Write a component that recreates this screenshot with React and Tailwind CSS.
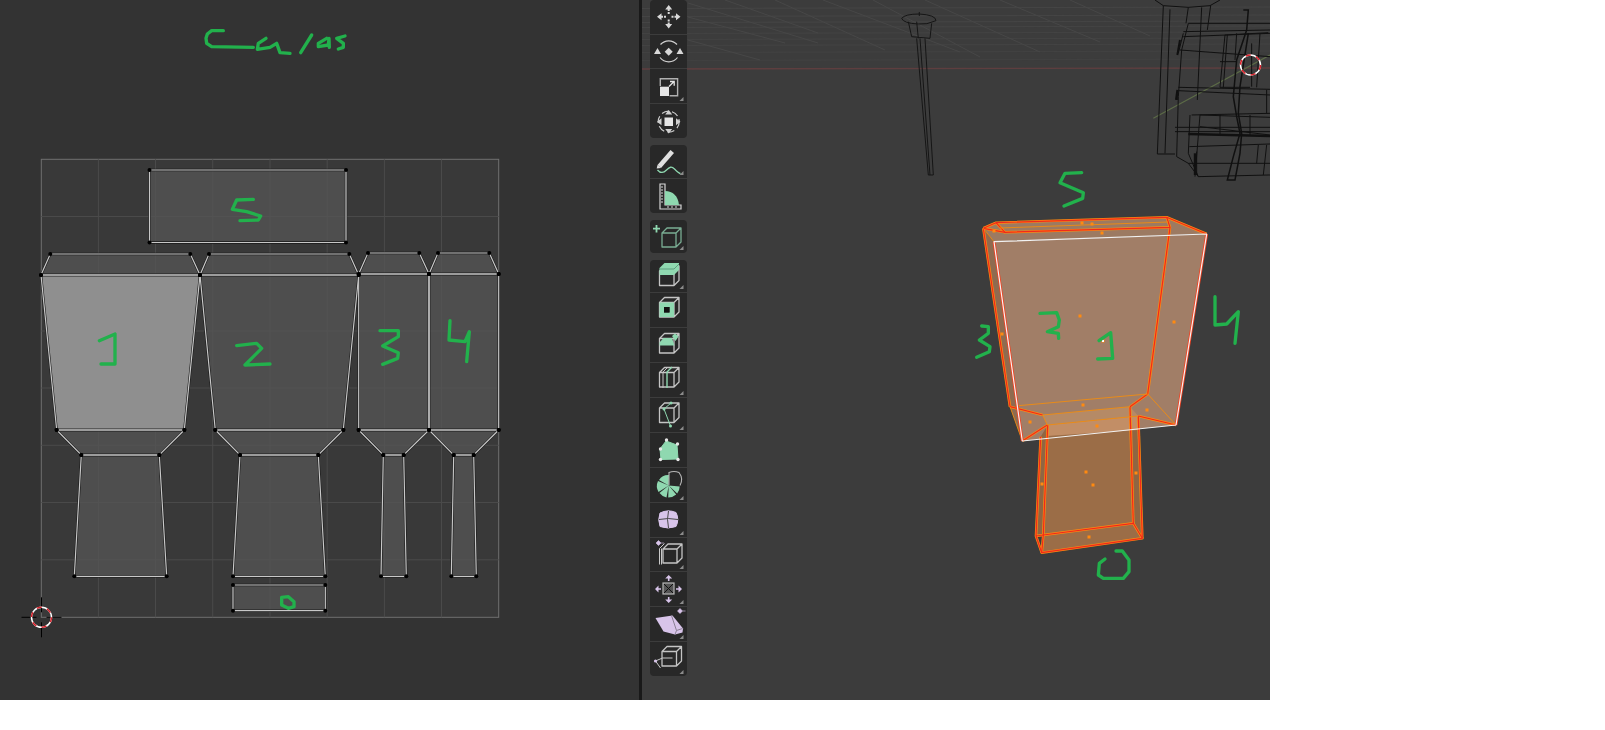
import React from "react";

const GREEN = "#22b14c";
const G = "#8fd8b0"; // tool green
const P = "#d8c4ea"; // tool purple
const W = "#c4c4c4";

// UV islands, in page pixels
const uvFaces = [
  [[149.5, 170], [346, 170], [346, 242.5], [149.5, 242.5]],
  [[50.3, 254], [190.3, 254], [200, 275], [41, 275]],
  [[41, 275], [200, 275], [184.3, 430], [56.7, 430]],
  [[56.7, 430], [184.3, 430], [159.3, 455], [81.3, 455]],
  [[81.3, 455], [159.3, 455], [166.7, 576.3], [74.3, 576.3]],
  [[209, 254], [349.3, 254], [358.7, 275], [200, 275]],
  [[200, 275], [358.7, 275], [343.3, 430], [215.3, 430]],
  [[215.3, 430], [343.3, 430], [318.3, 455], [240, 455]],
  [[240, 455], [318.3, 455], [325.3, 576.3], [233, 576.3]],
  [[233, 585], [325.3, 585], [325.3, 610.7], [233, 610.7]],
  [[368, 253], [419.3, 253], [429, 274], [358.7, 274]],
  [[358.7, 274], [429, 274], [429, 430], [358.7, 430]],
  [[358.7, 430], [429, 430], [403.7, 455], [383.3, 455]],
  [[383.3, 455], [403.7, 455], [406.3, 576.3], [381, 576.3]],
  [[438, 253], [489.3, 253], [498.7, 274], [429, 274]],
  [[429, 274], [498.7, 274], [498.7, 430], [429, 430]],
  [[429, 430], [498.7, 430], [473.7, 455], [453.7, 455]],
  [[453.7, 455], [473.7, 455], [476.3, 576.3], [451.3, 576.3]],
];

const str = (p) => p.map((q) => q.join(",")).join(" ");

// hand-drawn marks, [offset x, offset y, points at 3x]
const uvMarks = [
  [180, 10, "130,62 95,62 82,72 78,85 80,100 95,110 220,112"],
  [180, 10, "258,85 235,100 232,118 270,112 290,100 300,128 330,130"],
  [180, 10, "395,75 362,128"],
  [180, 10, "440,85 415,100 415,110 445,105 447,85 448,112"],
  [180, 10, "495,78 470,85 490,100 490,112 475,117"],
  [0, 130, "760,208 710,210 697,238 740,245 782,258 775,270 720,272"],
  [0, 130, "298,632 345,612 345,702 303,702"],
  [0, 130, "710,647 770,640 785,655 735,705 810,702"],
  [0, 130, "1140,602 1195,602 1195,620 1148,648 1195,668 1193,685 1148,703"],
  [0, 130, "1350,572 1347,630 1395,635 1408,605 1400,695"],
  [0, 420, "845,532 865,530 882,545 882,560 865,565 845,555 845,532"],
];

const viewMarks = [
  [960, 170, "365,8 315,10 300,38 370,68 368,85 312,108"],
  [960, 170, "240,430 290,428 298,450 295,470 262,485 295,490 296,505"],
  [960, 170, "417,512 452,488 458,565 413,567"],
  [960, 170, "65,468 85,470 85,490 58,510 90,530 88,545 50,562"],
  [960, 170, "765,380 765,465 800,462 835,425 825,520"],
  [990, 380, "378,513 397,513 417,540 417,575 400,595 340,595 325,585 328,550 345,537"],
];

function Marks({ list, width }) {
  return list.map(([x, y, p], i) => (
    <polyline
      key={i}
      points={p}
      transform={`translate(${x} ${y}) scale(${1 / 3})`}
      fill="none"
      stroke={GREEN}
      strokeWidth={width}
      strokeLinecap="round"
      strokeLinejoin="round"
    />
  ));
}

function Cursor({ x, y, cross }) {
  return (
    <g fill="none">
      {cross && (
        <path
          d={`M${x - 20} ${y}H${x - 5}M${x + 5} ${y}H${x + 20}M${x} ${y - 20}V${y - 5}M${x} ${y + 5}V${y + 20}`}
          stroke="#000"
          strokeWidth="1"
        />
      )}
      <circle cx={x} cy={y} r="10" stroke="#fff" strokeWidth="1.5" />
      <circle cx={x} cy={y} r="10" stroke="#d8202a" strokeWidth="1.5" strokeDasharray="5 5.5" />
    </g>
  );
}

function UvCanvas() {
  const gridX = [98.4, 155.5, 212.7, 270, 327.2, 384.4, 441.5];
  const gridY = [216.5, 273.7, 331, 388, 445.3, 502.5, 559.8];
  const verts = uvFaces.flat();
  return (
    <svg viewBox="0 0 639 700" className="block w-full h-full">
      <rect x="41.3" y="159.3" width="457.4" height="458" fill="#393939" stroke="#707070" strokeWidth="1" />
      {gridX.map((x) => (
        <line key={x} x1={x} x2={x} y1="159.3" y2="617.3" stroke="#4a4a4a" />
      ))}
      {gridY.map((y) => (
        <line key={y} y1={y} y2={y} x1="41.3" x2="498.7" stroke="#4a4a4a" />
      ))}
      {uvFaces.map((f, i) => (
        <polygon key={i} points={str(f)} fill={i === 2 ? "#8f8f8f" : "#545454"} fillOpacity={i === 2 ? 1 : 0.78} />
      ))}
      {uvFaces.map((f, i) => (
        <polygon key={i} points={str(f)} fill="none" stroke="#1a1a1a" strokeWidth="2.4" />
      ))}
      {uvFaces.map((f, i) => (
        <polygon key={i} points={str(f)} fill="none" stroke="#c8c8c8" strokeWidth="1.2" />
      ))}
      {verts.map(([x, y], i) => (
        <circle key={i} cx={x} cy={y} r="2" fill="#000" />
      ))}
      <Marks list={uvMarks} width={10} />
      <Cursor x={41.5} y={617.3} cross />
    </svg>
  );
}

// mesh edges in the 3D view: orange with a red core
const meshEdges = [
  "983.3,228.3 996,222.7 1166.7,217.3 1206.7,234",
  "996,222.7 1005,232.3 1170,227.3 1166.7,217.3",
  "983.3,228.3 1005,232.3",
  "983.3,228.3 1010,406.7",
  "1170,227.3 1147.7,394",
  "1147.7,394 1130,406.7",
  "1138.3,416 1176,425",
  "1010,406.7 1042.7,415",
  "1047.3,425 1022.3,441",
  "1040.7,436.7 1036,536 1041.7,552.7 1142.3,538.3 1133.3,523.3 1043.3,535 1036,536",
  "1047.7,425 1043.3,535 1041.7,552.7",
  "1130,406.7 1133.3,523.3",
  "1138.3,416 1142.3,538.3",
];
const thinEdges = [
  "1018.3,405.7 1147.7,394",
  "1042.7,415 1130,406.7",
  "1047.3,425 1138.3,416",
  "1147.7,394 1176,425",
  "994,241.7 983.3,228.3",
  "1000,228 1168,222",
  "1010,406.7 1022.3,441",
  "1042.7,415 1047.3,425",
];
const meshDots = [
  [994, 231], [1082, 223], [1092, 224], [1102, 233], [1080, 316], [1103, 341], [1174, 322], [1002, 334],
  [1083, 405], [1030, 422], [1147, 410], [1097, 426], [1086, 472], [1093, 485], [1042, 484], [1136, 473], [1089, 537],
];

function Viewport() {
  const rows = [8, 16, 22, 27, 33, 39, 45, 52, 60];
  return (
    <svg viewBox="642 0 628 700" className="absolute inset-0 block w-full h-full">
      <g stroke="#464646" strokeWidth="1" fill="none">
        {rows.map((y, i) => (
          <line key={y} x1="642" x2="1270" y1={y + 0.5} y2={y - 1} strokeOpacity={0.95 - i * 0.05} />
        ))}
        <path d="M688 3L818 43M688 17L785 43M725 0L818 33M775 0L885 50M823 0L960 52M873 0L980 57M925 0L1040 52M1000 0L1100 42M1070 0L1150 36M688 40L760 60" stroke="#474747" />
      </g>
      <line x1="642" x2="1270" y1="69" y2="68" stroke="#5e3e3f" strokeWidth="1.4" />

      {/* lamp */}
      <g transform="translate(860 0) scale(0.3333)" fill="none" stroke="#151515" strokeWidth="3">
        <path d="M125 55Q135 42 178 42Q228 45 228 62Q200 75 175 72Q130 70 125 55ZM178 36V48M145 65L155 110L210 115L215 70M170 65L175 115M170 115L205 525H220L195 115M180 115L210 525" />
      </g>

      {/* chair wireframe */}
      <g transform="translate(1120 0) scale(0.3333)" fill="none" stroke="#101010" strokeWidth="3">
        <path d="M100 355L450 165" stroke="#5c6b47" strokeWidth="3.500" />
        <path d="M105 0L130 17L205 22L270 17L300 0M130 17L112 462H165M150 28L135 460M245 22L232 300M272 17L262 90M205 22L198 70" />
        <path d="M205 70L185 150L175 290L170 470L205 490L235 530M205 70H450M190 95L450 90M190 110L450 100M180 150L450 170M175 262L450 268M175 272L450 285M190 100L175 160" />
        <path d="M315 105L300 262L390 262M315 105L445 98M322 105L310 262M300 185H350M420 100L410 262M395 130V260M350 100L345 180" />
        <path d="M370 30H385L380 90L350 180L340 290L350 350L360 400L340 470L322 540H345L360 460L365 400L355 340L360 260L385 100" strokeWidth="4.500" />
        <path d="M215 345L450 340M210 345L205 460M240 345L225 530M165 382H450M165 395H450M240 380L450 405M205 460L235 530L450 525M205 490L450 490M415 435L410 490M230 455V525M172 280V300M208 440L450 432M240 345L450 352M300 345V405M390 345V405M440 270V340M440 435L430 525" />
        <path d="M205 402L450 408" strokeWidth="7" />
        <path d="M225 460V525" strokeWidth="7" />
        <path d="M180 120L172 165M172 270L168 300" strokeWidth="6" />
      </g>
      <Cursor x={1250.5} y={65} />

      {/* mesh */}
      <polygon points="983.3,228.3 996,222.7 1166.7,217.3 1206.7,234 994,241.7" fill="#9c7a62" />
      <polygon points="983.3,228.3 994,241.7 1022.3,441 1010,406.7" fill="#8f6b50" />
      <polygon points="994,241.7 1206.7,234 1176,425 1022.3,441" fill="#a17e67" />
      <polygon points="1047.3,425 1138.3,416 1133.3,523.3 1043.3,535" fill="#9b6d47" />
      <polygon points="1040.7,436.7 1047.7,425 1043.3,535 1036,536" fill="#8f6643" />
      <polygon points="1133,416 1138.3,416 1142.3,538.3 1133.3,523.3" fill="#8f6643" />
      <polygon points="1043.3,535 1133.3,523.3 1142.3,538.3 1041.7,552.7" fill="#9b6d47" />
      <polygon points="1042.7,415 1130,406.7 1138.3,416 1047.3,425" fill="#b58a66" />
      <polygon points="1047.3,425 1138.3,416 1138,430 1047,436" fill="#c28e66" />
      <g fill="none" strokeLinejoin="round">
        {meshEdges.map((p, i) => (
          <polyline key={i} points={p} stroke="#ff8a10" strokeWidth="2.6" />
        ))}
        {meshEdges.map((p, i) => (
          <polyline key={i} points={p} stroke="#f02a1c" strokeWidth="1.2" />
        ))}
        {thinEdges.map((p, i) => (
          <polyline key={i} points={p} stroke="#f08c10" strokeWidth="0.9" />
        ))}
        <polyline points="1022.3,441 994,241.7" stroke="#f5401f" strokeWidth="2.8" />
        <polyline points="1206.7,234 1176,425" stroke="#f5401f" strokeWidth="2.8" />
        <polygon points="994,241.7 1206.7,234 1176,425 1022.3,441" stroke="#f2f2f2" strokeWidth="1.2" />
      </g>
      {meshDots.map(([x, y], i) => (
        <rect key={i} x={x - 1.5} y={y - 1.5} width="3" height="3" fill="#ff8a10" />
      ))}
      <rect x="1102" y="340" width="2" height="2" fill="#fff" />
      <Marks list={viewMarks} width={10} />
    </svg>
  );
}

// small box used by most of the tool icons
function Cube({ x = 9.5, y = 11, s = 14.5, d = 5, c = W }) {
  return (
    <path
      d={`M${x} ${y}h${s}v${s}h${-s}zM${x} ${y}l${d} ${-d}h${s}v${s}l${-d} ${d}M${x + s} ${y}l${d} ${-d}`}
      fill="none"
      stroke={c}
      strokeWidth="1.3"
      strokeLinejoin="round"
    />
  );
}

const icons = {
  move: (
    <g fill="#d8d8d8" stroke="#d8d8d8">
      <path d="M18.7 5l3.500 4.500h-7zM18.7 28.5l3.500-4.500h-7zM7 16.7l4.500-3.500v7zM30.5 16.7l-4.500-3.500v7z" stroke="none" />
      <path d="M18.7 9v5M18.7 19.500v5M11 16.7h5M21.500 16.7h5" strokeWidth="2" fill="none" strokeDasharray="2 1" />
    </g>
  ),
  rotate: (
    <g stroke="#cfcfcf" fill="none" strokeWidth="1.2">
      <path d="M10.500 9.500A11 11 0 0 1 27 9.500M27.500 22.500A11 11 0 0 1 10 22.500" />
      <path d="M18.7 12.700l4 4-4 4-4-4z" fill="#d8d8d8" stroke="none" />
      <path d="M4 19h7l-3.500-6zM26.500 19h7l-3.500-6z" fill="#d8d8d8" stroke="none" />
    </g>
  ),
  scale: (
    <g>
      <path d="M10.300 17V9.700h17.300v17h-8" fill="none" stroke="#b0b0b0" strokeWidth="1.400" />
      <rect x="10" y="17.700" width="9" height="9.300" fill="#e6e6e6" />
      <path d="M19 17.500l5-5M20 12.500h4.200v4.200" fill="none" stroke="#e6e6e6" strokeWidth="1.300" />
    </g>
  ),
  transform: (
    <g>
      <circle cx="18.700" cy="17.700" r="10.500" fill="none" stroke="#cfcfcf" strokeWidth="1.200" strokeDasharray="7 3.500" />
      <rect x="14.500" y="13.500" width="8.500" height="8.500" fill="#e6e6e6" />
      <path d="M18.700 6l3.500 4.500h-7zM18.700 29.500l3.500-4.500h-7zM7 17.700l4.500-3.500v7zM30.500 17.700l-4.500-3.500v7z" fill="#cfcfcf" />
    </g>
  ),
  annotate: (
    <g>
      <path d="M7.500 20l3.500 3L24 8l-3.500-3z" fill="#e0e0e0" />
      <path d="M7.500 20l-.8 3.500 4.300-.5" fill="#e0e0e0" />
      <path d="M7.500 25c3 3.500 6 3 9 0s5-4 8-1 5 4.500 6 4.500" fill="none" stroke={G} strokeWidth="1.300" />
    </g>
  ),
  measure: (
    <g>
      <path d="M10 5h5v21h16v4H10z" fill="none" stroke="#d6d6d6" strokeWidth="1.200" />
      <path d="M11 8h2M11 11h2M11 14h2M11 17h2M11 20h2M11 23h2M18 27v2M22 27v2M26 27v2" stroke="#d6d6d6" />
      <path d="M15 12c8 0 13 5 14 14H15z" fill={G} />
    </g>
  ),
  add: (
    <g>
      <path d="M6.500 5v7.500M3 8.700h7" stroke={G} strokeWidth="1.800" />
      <Cube x={12} y={13} s={14} d={5} c="#79ad93" />
    </g>
  ),
  extrude: (
    <g>
      <Cube x={9.500} y={11} s={14.500} d={5} />
      <path d="M9.500 8l5-5h14.500v7l-5 5H9.500z" fill={G} />
      <path d="M9.500 9h14.500M24 9l5-5" stroke="#5f9c7e" strokeWidth="1" fill="none" />
    </g>
  ),
  inset: (
    <g>
      <Cube x={9.500} y={9.500} s={14.500} d={5} />
      <path d="M9.500 9.500h14.500v14.500H9.500zM14 14v5.500h5.500V14z" fill={G} fillRule="evenodd" />
      <rect x="14" y="14" width="5.500" height="5.500" fill="#111" />
    </g>
  ),
  bevel: (
    <g>
      <Cube x={9.500} y={10.500} s={14.500} d={5} />
      <path d="M9.500 17.500v-3l4-4.500H22l2.500 7.500zM22 8l3-2.500 3.500 3-3 4.500z" fill={G} />
    </g>
  ),
  loop: (
    <g>
      <Cube x={9.500} y={9.500} s={14.500} d={5} />
      <path d="M17 25V9l5-5" fill="none" stroke={G} strokeWidth="1.400" />
      <path d="M13 9V25M13 9l5-5" fill="none" stroke={W} strokeWidth="1" />
    </g>
  ),
  knife: (
    <g>
      <Cube x={9.500} y={10} s={14.500} d={5} />
      <path d="M14 11l7-6M14 11l6.500 17" stroke={G} strokeWidth="1" fill="none" />
      <circle cx="14" cy="11" r="1.500" fill={G} />
      <circle cx="21" cy="5" r="1.500" fill={G} />
      <circle cx="20.500" cy="28" r="1.500" fill={G} />
    </g>
  ),
  poly: (
    <g>
      <path d="M10 16l6-8 11 4 1 14-17 .5z" fill={G} stroke={G} strokeLinejoin="round" />
      <circle cx="16.500" cy="7" r="1.700" fill="#e6e6e6" />
      <circle cx="27.500" cy="11" r="1.700" fill="#e6e6e6" />
      <circle cx="10.500" cy="16" r="1.700" fill="#e6e6e6" />
      <circle cx="10.500" cy="26.500" r="1.700" fill="#e6e6e6" />
      <circle cx="28" cy="26.500" r="1.700" fill="#e6e6e6" />
    </g>
  ),
  spin: (
    <g>
      <path d="M18.700 17.500L19 7a11 11 0 0 0-10 5zM18.700 17.500L8 13a12 12 0 0 0 .5 11zM18.700 17.500L9.500 25a12 12 0 0 0 7 4.500zM18.700 17.500l-.5 12a12 12 0 0 0 8-3zM18.700 17.500l8.500 8a12 12 0 0 0 2.500-7z" fill={G} />
      <path d="M19 17V4.500a14 14 0 0 1 10 0 12 12 0 0 1 1 13" fill="none" stroke="#b5b5b5" strokeWidth="1.100" />
    </g>
  ),
  smooth: (
    <g>
      <path d="M10 10q8-4 16-.5 3.500 7 0 14-8 3-16 0-2.500-7 0-13.500z" fill={P} stroke={P} />
      <path d="M9 16.500q9-2 19 0M18.500 8q-2 8 0 17" fill="none" stroke="#4a4a4a" strokeWidth="1" />
    </g>
  ),
  slide: (
    <g>
      <Cube x={13} y={11} s={14} d={5} />
      <path d="M9.500 26.500V10.500l5-5M11.500 26.500V10.500" fill="none" stroke="#c9c9c9" strokeWidth="1" />
      <path d="M8.500 2.500l2.500 2.500-2.500 2.500-2.500-2.500zM11 5h3" fill={P} stroke={P} strokeWidth=".6" />
    </g>
  ),
  shrink: (
    <g>
      <rect x="13" y="11" width="11" height="11" fill="#555" stroke="#b5b5b5" strokeWidth="1.200" />
      <path d="M14 12l9 9M23 12l-9 9" stroke="#111" strokeWidth="1" />
      <path d="M18.700 3l3.500 3.500h-7zM18.700 31l3.500-3.500h-7zM5 17l3.500-3.500v7zM32 17l-3.500-3.500v7z" fill={P} />
      <path d="M18.700 6v3M18.700 25v3M8 17h3M26 17h3" stroke={P} strokeWidth="1.600" />
    </g>
  ),
  shear: (
    <g>
      <path d="M5.500 11l17-2.500L33 21.500l-.5 4-7.500 2L13.500 24.500z" fill={P} />
      <path d="M21.500 8.500l5 15-1.500 4M26.500 23.500l6-2" fill="none" stroke="#8a8094" strokeWidth="1" />
      <path d="M30 1.500l2.500 2.500-2.500 2.500-2.500-2.500zM32.500 4h3" fill={P} stroke={P} strokeWidth=".6" />
    </g>
  ),
  rip: (
    <g>
      <Cube x={12} y={9.500} s={14.500} d={5} />
      <path d="M5.500 19l7-3 10 0M5.500 19l5 7" fill="none" stroke="#c9c9c9" strokeWidth="1" />
      <circle cx="5.500" cy="19" r="1.600" fill={P} />
    </g>
  ),
};

// toolbar groups, heights read off the reference
const toolGroups = [
  [
    { name: "move", h: 34 },
    { name: "rotate", h: 34 },
    { name: "scale", h: 35, corner: true },
    { name: "transform", h: 35 },
  ],
  [
    { name: "annotate", h: 33, corner: true },
    { name: "measure", h: 35 },
  ],
  [{ name: "add", h: 33, corner: true }],
  [
    { name: "extrude", h: 32, corner: true },
    { name: "inset", h: 35 },
    { name: "bevel", h: 35 },
    { name: "loop", h: 35, corner: true },
    { name: "knife", h: 35, corner: true },
    { name: "poly", h: 35 },
    { name: "spin", h: 35, corner: true },
    { name: "smooth", h: 35, corner: true },
    { name: "slide", h: 34, corner: true },
    { name: "shrink", h: 35, corner: true },
    { name: "shear", h: 35, corner: true },
    { name: "rip", h: 35, corner: true },
  ],
];

function ToolButton({ name, h, corner }) {
  return (
    <div className="border-t border-[#3c3c3c] first:border-t-0" style={{ height: h }}>
      <svg viewBox={`0 0 37 ${h}`} className="block w-[37px]" style={{ height: h }}>
        {icons[name]}
        {corner && <polygon points={`29.500,${h - 3} 33.500,${h - 3} 33.500,${h - 7}`} fill="#8c8c8c" />}
      </svg>
    </div>
  );
}

export default function App() {
  return (
    <div className="w-[1605px] h-[730px] bg-white overflow-hidden">
      <div className="flex w-[1270px] h-[700px]">
        <div className="w-[639px] h-full bg-[#333333]">
          <UvCanvas />
        </div>
        <div className="w-[3px] h-full bg-[#191919]" />
        <div className="relative flex-1 h-full bg-[#3c3c3c] overflow-hidden">
          <Viewport />
          <div className="relative ml-2 w-[37px] flex flex-col gap-[7px]">
            {toolGroups.map((group, i) => (
              <div key={i} className="bg-[#282828] rounded-[4px] overflow-hidden">
                {group.map((t) => (
                  <ToolButton key={t.name} {...t} />
                ))}
              </div>
            ))}
          </div>
        </div>
      </div>
    </div>
  );
}
